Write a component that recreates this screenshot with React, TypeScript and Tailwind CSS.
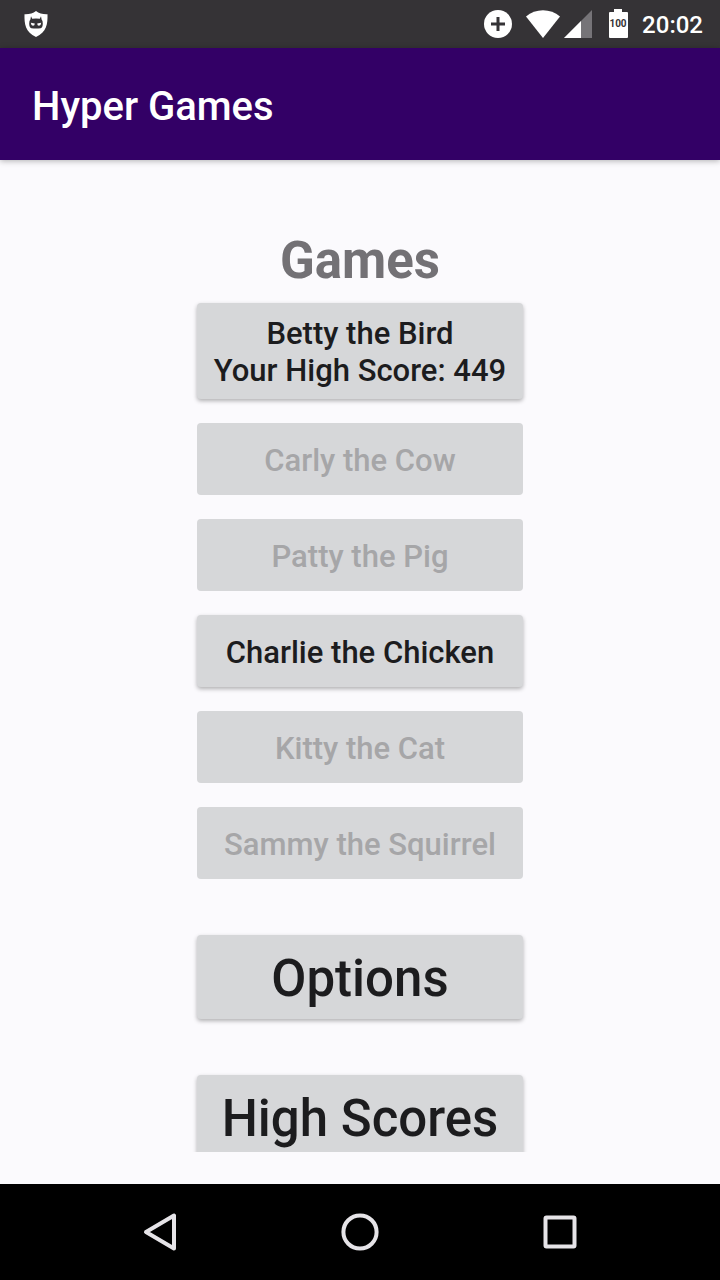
import clsx from "clsx";

const games = [
  { name: "Betty the Bird", highScore: 449, unlocked: true },
  { name: "Carly the Cow", unlocked: false },
  { name: "Patty the Pig", unlocked: false },
  { name: "Charlie the Chicken", unlocked: true },
  { name: "Kitty the Cat", unlocked: false },
  { name: "Sammy the Squirrel", unlocked: false },
];

const raised = "shadow-[0_2px_4px_rgba(0,0,0,0.3)]";

function StatusBar() {
  return (
    <div className="flex h-12 shrink-0 items-center bg-[#353336] pr-[17px] pl-6 text-white">
      <svg width="24" height="28" viewBox="0 0 24 28" fill="currentColor" aria-label="Privacy Guard">
        <path d="M12 1 C9 3.4 5 4.4 0.5 4.2 C0.2 14 1.4 22 12 27 C22.6 22 23.8 14 23.5 4.2 C19 4.4 15 3.4 12 1z" />
        <path
          fill="#353336"
          d="M7 6.3 L8.2 8.7 Q12 8.2 15.8 8.7 L17 6.3 L17.6 9.4 Q18.8 10.2 18.8 13.6 Q18.8 17.8 16.6 18.2 Q12 18.8 7.4 18.2 Q5.2 17.8 5.2 13.6 Q5.2 10.2 6.4 9.4z"
        />
        <path d="M6.8 12.8 L10.8 13.6 Q10.8 15.8 9 15.8 Q7 15.6 6.8 12.8z M17.2 12.8 L13.2 13.6 Q13.2 15.8 15 15.8 Q17 15.6 17.2 12.8z" />
      </svg>

      <div className="ml-auto flex items-center">
        <svg width="28" height="28" viewBox="0 0 28 28" aria-label="Data saver">
          <circle cx="14" cy="14" r="14" fill="currentColor" />
          <path d="M14 7v14M7 14h14" stroke="#353336" strokeWidth="3" />
        </svg>
        <svg className="ml-3.5" width="34" height="28" viewBox="0 0 34 28" fill="currentColor" aria-label="Wi-Fi">
          <path d="M17 28 L0 6.4 C9.5 -1.9 24.5 -1.9 34 6.4z" />
        </svg>
        <svg className="ml-1" width="28" height="28" viewBox="0 0 28 28" fill="currentColor" aria-label="Signal">
          <path d="M28 0v28H0z" fill="#767478" />
          <path d="M17 11v17H0z" />
        </svg>
        <svg className="ml-4" width="20" height="30" viewBox="0 0 20 30" aria-label="Battery">
          <path d="M6 0h8v3h5a1 1 0 0 1 1 1v24a1 1 0 0 1-1 1H2a1 1 0 0 1-1-1V4a1 1 0 0 1 1-1h4z" fill="currentColor" />
          <text
            x="10"
            y="18"
            textAnchor="middle"
            fill="#353336"
            className="font-['Roboto',sans-serif] text-[10px] font-bold"
          >
            100
          </text>
        </svg>
        <span className="ml-3.5 pt-0.5 text-2xl font-medium">20:02</span>
      </div>
    </div>
  );
}

function NavBar() {
  return (
    <nav className="flex h-24 shrink-0 items-center justify-center gap-40 bg-black text-[#e6e4e8]">
      <button type="button" aria-label="Back">
        <svg width="40" height="40" viewBox="0 0 40 40" fill="none" stroke="currentColor" strokeWidth="4" strokeLinejoin="round">
          <path d="M34 3.5v33L6 20z" />
        </svg>
      </button>
      <button type="button" aria-label="Home">
        <svg width="40" height="40" viewBox="0 0 40 40" fill="none" stroke="currentColor" strokeWidth="4">
          <circle cx="20" cy="20" r="16.6" />
        </svg>
      </button>
      <button type="button" aria-label="Recent apps">
        <svg width="40" height="40" viewBox="0 0 40 40" fill="none" stroke="currentColor" strokeWidth="4">
          <rect x="5.5" y="5.5" width="29" height="29" rx="1" />
        </svg>
      </button>
    </nav>
  );
}

export default function App() {
  return (
    <div className="flex h-screen flex-col bg-[#fbfafd] font-['Roboto',sans-serif]">
      <StatusBar />
      <header className="z-10 flex h-28 shrink-0 items-center bg-[#330066] px-8 pt-1.5 shadow-[0_1px_6px_rgba(0,0,0,0.3)]">
        <h1 className="text-[40px] font-medium text-white">Hyper Games</h1>
      </header>

      <main className="min-h-0 flex-1 pb-8">
        <div className="h-full overflow-hidden pt-[67px]">
          <div className="mx-auto flex w-fit flex-col">
            <h2 className="mb-2 text-center text-[51px] leading-[68px] font-bold text-[#737175]">Games</h2>

            {/* Locked games stay flat and greyed out */}
            <div className="flex flex-col gap-6">
              {games.map((game) => (
                <button
                  key={game.name}
                  type="button"
                  disabled={!game.unlocked}
                  className={clsx(
                    "flex min-h-[72px] flex-col items-center justify-center rounded-sm bg-[#d6d7d9] px-[17px] pt-3 pb-2.5 text-[31px] leading-[37px] font-medium",
                    game.unlocked ? raised : "",
                    game.unlocked ? "text-[#1c1c1e]" : "text-[#a6a6a8]"
                  )}
                >
                  <span>{game.name}</span>
                  {game.highScore && <span>Your High Score: {game.highScore}</span>}
                </button>
              ))}
            </div>

            <div className="mt-14 flex flex-col gap-14 text-[51px] leading-[60px] font-medium text-[#1c1c1e]">
              <button type="button" className={clsx("rounded-sm bg-[#d6d7d9] pt-3.5 pb-2.5", raised)}>
                Options
              </button>
              <button type="button" className={clsx("rounded-sm bg-[#d6d7d9] pt-3.5 pb-2.5", raised)}>
                High Scores
              </button>
            </div>
          </div>
        </div>
      </main>

      <NavBar />
    </div>
  );
}
